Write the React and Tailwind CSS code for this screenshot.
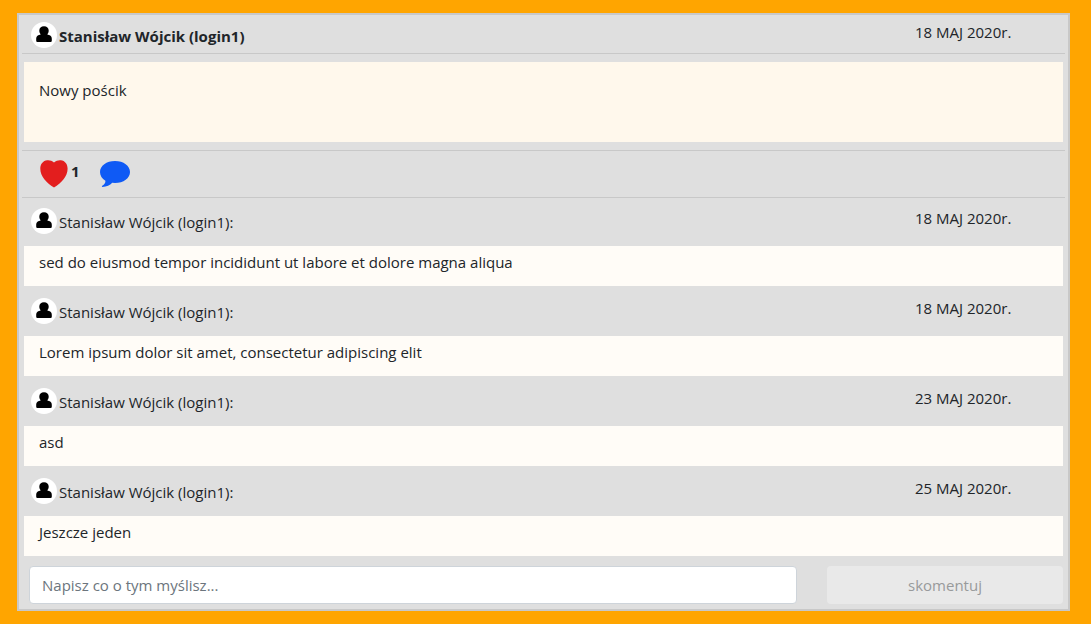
import React from 'react';

const author = 'Stanisław Wójcik (login1)';

const comments = [
  { date: '18 MAJ 2020r.', text: 'sed do eiusmod tempor incididunt ut labore et dolore magna aliqua' },
  { date: '18 MAJ 2020r.', text: 'Lorem ipsum dolor sit amet, consectetur adipiscing elit' },
  { date: '23 MAJ 2020r.', text: 'asd' },
  { date: '25 MAJ 2020r.', text: 'Jeszcze jeden' },
];

function Avatar() {
  return (
    <svg viewBox="0 0 26 26" className="h-[26px] w-[26px] shrink-0" aria-hidden="true">
      <circle cx="13" cy="13" r="13" fill="#fff" />
      <path
        d="M13 4.2C15.9 4.2 17.7 5.9 17.7 8.6C17.7 10.3 17.1 11.5 16.3 12.5C17.2 12.9 18.6 13 19.5 13.7C20.6 14.5 20.8 15.8 20.8 17V18.8Q20.8 20 19.6 20H6.4Q5.2 20 5.2 18.8V17C5.2 15.8 5.4 14.5 6.5 13.7C7.4 13 8.8 12.9 9.7 12.5C8.9 11.5 8.3 10.3 8.3 8.6C8.3 5.9 10.1 4.2 13 4.2Z"
        fill="#000"
      />
    </svg>
  );
}

function Byline({ name, date }) {
  return (
    <div className="flex items-start justify-between pl-[7px]">
      <div className="flex items-start gap-0.5">
        <Avatar />
        <span className="pt-0.5">{name}</span>
      </div>
      <time className="w-37 shrink-0 -mt-0.5">{date}</time>
    </div>
  );
}

export default function App() {
  return (
    <div className="min-h-screen bg-[#ffa500] py-[13px] pl-[17px] pr-[21px] font-['Open_Sans','Noto_Sans',sans-serif] text-[15px] leading-6 text-[#212529]">
      <article className="border-2 border-[#c8c8c8] bg-[#dfdfdf] px-[3px] pb-[5px]">
        <header className="border-b border-[#c8c8c8] px-0.5 pt-[7px] pb-[5px]">
          <Byline name={<strong className="font-bold">{author}</strong>} date="18 MAJ 2020r." />
        </header>

        <div className="mx-0.5 my-2 h-20 bg-[#fff8ec] px-[15px] py-4">
          <p>Nowy pościk</p>
        </div>

        <div className="flex items-start gap-5 border-y border-[#c8c8c8] px-[18px] py-[9px]">
          <button type="button" aria-label="Lubię to" className="flex h-7 items-start gap-[3px] leading-[22px]">
            <svg viewBox="0 0 28 28" className="h-7 w-7" aria-hidden="true">
              <path
                d="M14 2.5C16.1 .7 18.6 0 20.8 .3C25 .8 27.6 4 27.6 8.8C27.6 16.2 21.5 23 14 27.5C6.5 23 .3 16.2 .3 8.8C.3 4 3 .8 7.2 .3C9.5 0 12 .7 14 2.5Z"
                fill="#e31e1e"
              />
            </svg>
            <span className="font-bold">1</span>
          </button>
          <button type="button" aria-label="Komentarze">
            <svg viewBox="0 0 30 28" className="h-7 w-[30px]" aria-hidden="true">
              <path
                d="M15 1C23.5 1 30 5.8 30 12C30 18.2 23.5 23 15 23L12.2 22.8C10 25.3 6.5 26.8 2.5 26.9C1.8 26.9 1.7 26.1 2.3 25.7C4.4 24.6 5.6 22.8 5.4 20.7C2 18.7 0 15.6 0 12C0 5.8 6.5 1 15 1Z"
                fill="#0f5af5"
              />
            </svg>
          </button>
        </div>

        <section className="space-y-0.5 px-0.5">
          {comments.map((comment, index) => (
            <article key={index}>
              <div className="h-12 pt-2.5">
                <Byline name={`${author}:`} date={comment.date} />
              </div>
              <p className="bg-[#fffcf7] px-[15px] pt-1 pb-3">{comment.text}</p>
            </article>
          ))}
        </section>

        <form className="mt-2.5 flex gap-[30px] pr-0.5 pl-[7px]" onSubmit={(event) => event.preventDefault()}>
          <input
            type="text"
            aria-label="Komentarz"
            placeholder="Napisz co o tym myślisz..."
            className="h-[38px] min-w-0 flex-1 rounded border border-[#ced4da] bg-white px-3 placeholder:text-[#6c757d]"
          />
          <button type="submit" disabled className="h-[38px] w-59 rounded bg-[#e9e9e9] text-[#989a9b]">
            skomentuj
          </button>
        </form>
      </article>
    </div>
  );
}
